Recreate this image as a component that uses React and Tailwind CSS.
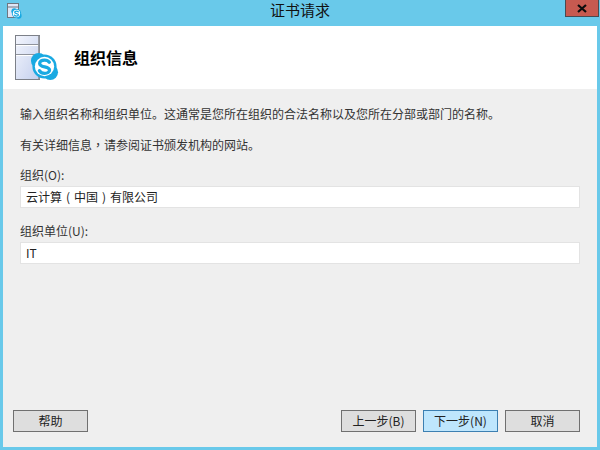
function SkypeBadge({ size, x, y }) {
  return (
    <svg x={x} y={y} width={size} height={size} viewBox="0 0 30 30">
      <circle cx="9" cy="9" r="8" fill="#19a9e2" />
      <circle cx="21" cy="21" r="8" fill="#19a9e2" />
      <circle cx="15" cy="15" r="12.500" fill="#19a9e2" />
      <circle cx="15" cy="15" r="10" fill="#fff" />
      <path d="M20 10.600c-1-1.500-2.900-2.300-5.100-2.300-2.700 0-4.900 1.300-4.900 3.500 0 4.600 10.200 2.500 10.200 6.800 0 2.200-2.300 3.500-5 3.500-2.500 0-4.500-1-5.500-2.800" fill="none" stroke="#19a9e2" strokeWidth="3.400" strokeLinecap="round" />
    </svg>
  )
}

function ServerIcon() {
  return (
    <svg width="46" height="46" viewBox="0 0 46 46">
      <defs>
        <linearGradient id="panel" x1="0" y1="0" x2="1" y2="1">
          <stop offset="0" stopColor="#f4f6fd" />
          <stop offset="1" stopColor="#c3cfed" />
        </linearGradient>
      </defs>
      <rect x="0.500" y="0.500" width="24" height="44" fill="url(#panel)" stroke="#7c8088" />
      <rect x="23" y="1" width="1.500" height="43" fill="#9a9ca2" />
      <path d="M1 9.500h23M1 19.500h23" stroke="#8f939c" strokeWidth="1" />
      <path d="M1 10.500h22M1 20.500h22" stroke="#fff" strokeWidth="1" />
      <SkypeBadge x={15} y={17} size={29} />
    </svg>
  )
}

function SmallIcon() {
  return (
    <svg width="16" height="17" viewBox="0 0 16 17">
      <rect x="0.500" y="0.500" width="11" height="14" fill="#dfe6f6" stroke="#6f7680" />
      <path d="M1 4h10" stroke="#6f7680" />
      <SkypeBadge x={4} y={5} size={11} />
    </svg>
  )
}

function Field({ label, children }) {
  return (
    <div className="flex flex-col">
      <label className="h-[20px] text-[12px] leading-[18px] text-[#333]">{label}</label>
      <div className="h-[22px] border border-[#e3e3e3] bg-white px-[5px] text-[12px] leading-[20px] text-[#222]">{children}</div>
    </div>
  )
}

function Btn({ children, primary }) {
  return (
    <button
      className={`h-[22px] w-[75px] border text-[12px] leading-[18px] text-[#222] ${
        primary ? 'border-[#3c7fb1] bg-[#bee6fd]' : 'border-[#707070] bg-[#dedede]'
      }`}
    >
      {children}
    </button>
  )
}

// centred comma, as the Traditional Chinese cut draws it
function Punct({ children }) {
  return <span className="font-['Noto_Sans_CJK_TC',sans-serif]">{children}</span>
}

// bracket centred in a full-width cell
function Paren({ children }) {
  return <span className="inline-block w-[12px] text-center">{children}</span>
}

export default function App() {
  return (
    <div className="flex h-[450px] w-[600px] flex-col overflow-hidden bg-[#69c9ea] px-[3px] pb-[3px] font-['Noto_Sans_CJK_SC','Liberation_Sans',sans-serif]">
      {/* title bar */}
      <div className="relative flex h-[26px] shrink-0 items-center justify-center">
        <div className="absolute top-[3px] left-[4px]"><SmallIcon /></div>
        <span className="mb-[6px] text-[15px] leading-[20px] text-[#111]">证书请求</span>
        <div className="absolute top-0 right-[-2px] flex h-[17px] w-[34px] items-center justify-center border border-t-0 border-[#4a4a50] bg-[#c75a50]">
          <svg width="10" height="9" viewBox="0 0 10 9">
            <path d="M1 1l8 7M9 1L1 8" stroke="#0c0c0c" strokeWidth="2.200" />
          </svg>
        </div>
      </div>

      {/* header */}
      <div className="flex h-[63px] shrink-0 items-center gap-[13px] bg-white pl-[12px]">
        <ServerIcon />
        <h1 className="mb-[2px] text-[16px] leading-[20px] font-bold text-black">组织信息</h1>
      </div>

      {/* body */}
      <div className="flex flex-1 flex-col bg-[#efefef] px-[17px]">
        <p className="mt-[16px] h-[18px] text-[12px] leading-[18px] text-[#333]">输入组织名称和组织单位。这通常是您所在组织的合法名称以及您所在分部或部门的名称。</p>
        <p className="mt-[13px] h-[18px] text-[12px] leading-[18px] text-[#333]">有关详细信息<Punct>，</Punct>请参阅证书颁发机构的网站。</p>
        <div className="mt-[12px] flex flex-col gap-[14px]">
          <Field label="组织(O):">
            云计算<Paren>(</Paren>中国<Paren>)</Paren>有限公司
          </Field>
          <Field label="组织单位(U):">IT</Field>
        </div>
        <div className="mt-auto mb-[15px] -ml-[7px] flex items-center">
          <Btn>帮助</Btn>
          <div className="ml-auto flex gap-[7px]">
            <Btn>上一步(B)</Btn>
            <Btn primary>下一步(N)</Btn>
            <Btn>取消</Btn>
          </div>
        </div>
      </div>
    </div>
  )
}
